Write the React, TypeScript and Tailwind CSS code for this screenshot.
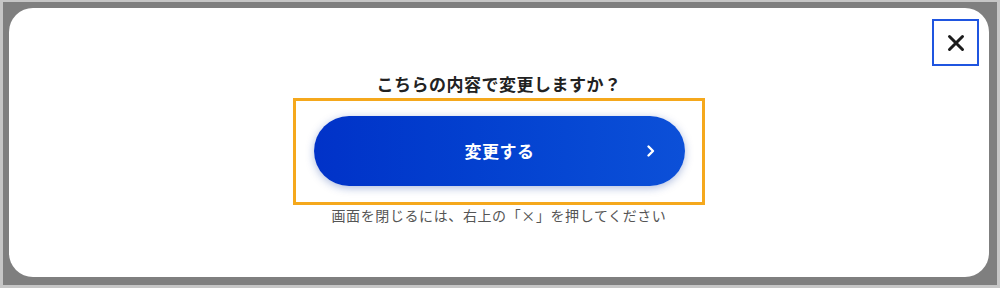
import React from "react";

export default function App() {
  return (
    <div
      className="w-[1000px] h-[288px] bg-[#c6c6c6] pt-[2px] pl-[3px] pr-[3px] pb-[3px]"
      style={{ fontFamily: '"Noto Sans CJK JP", "Noto Sans", sans-serif' }}
    >
      <div className="w-full h-full bg-[#7f7f7f] pt-[6px] pl-[6px] pr-[8px] pb-[8px]">
        <div className="relative w-full h-full bg-white rounded-[24px] flex flex-col items-center pt-[64px]">
          <button className="absolute top-[11px] right-[10px] w-[47px] h-[47px] border-2 border-[#1f55e0] flex items-center justify-center bg-white">
            <svg width="18" height="18" viewBox="0 0 18 18">
              <path d="M2.5 2.5 L15.5 15.5 M15.5 2.5 L2.5 15.5" stroke="#1c1c1c" strokeWidth="3" strokeLinecap="round" />
            </svg>
          </button>
          <div className="h-[24px] leading-[24px] text-[17px] font-bold text-[#222] tracking-[0.5px]">
            こちらの内容で変更しますか？
          </div>
          <div className="mt-[2px] w-[412px] h-[107px] border-[3px] border-[#f5a81c] pt-[15px] pl-[18px] pr-[17px]">
            <div className="relative h-[70px] w-full rounded-full bg-gradient-to-r from-[#0132c8] to-[#0c50d8] shadow-[0_2px_8px_rgba(20,60,160,0.35)] flex items-center justify-center">
              <span className="text-white text-[17px] font-bold tracking-[0.5px]">変更する</span>
              <svg className="absolute right-[28px] top-1/2 -translate-y-1/2" width="12" height="14" viewBox="0 0 12 14">
                <path d="M3.5 2.5 L8 7 L3.5 11.5" stroke="white" strokeWidth="2.4" fill="none" strokeLinecap="round" strokeLinejoin="round" />
              </svg>
            </div>
          </div>
          <div className="h-[20px] leading-[20px] text-[14px] text-[#555] tracking-[0.6px]">
            画面を閉じるには、右上の「×」を押してください
          </div>
        </div>
      </div>
    </div>
  );
}
